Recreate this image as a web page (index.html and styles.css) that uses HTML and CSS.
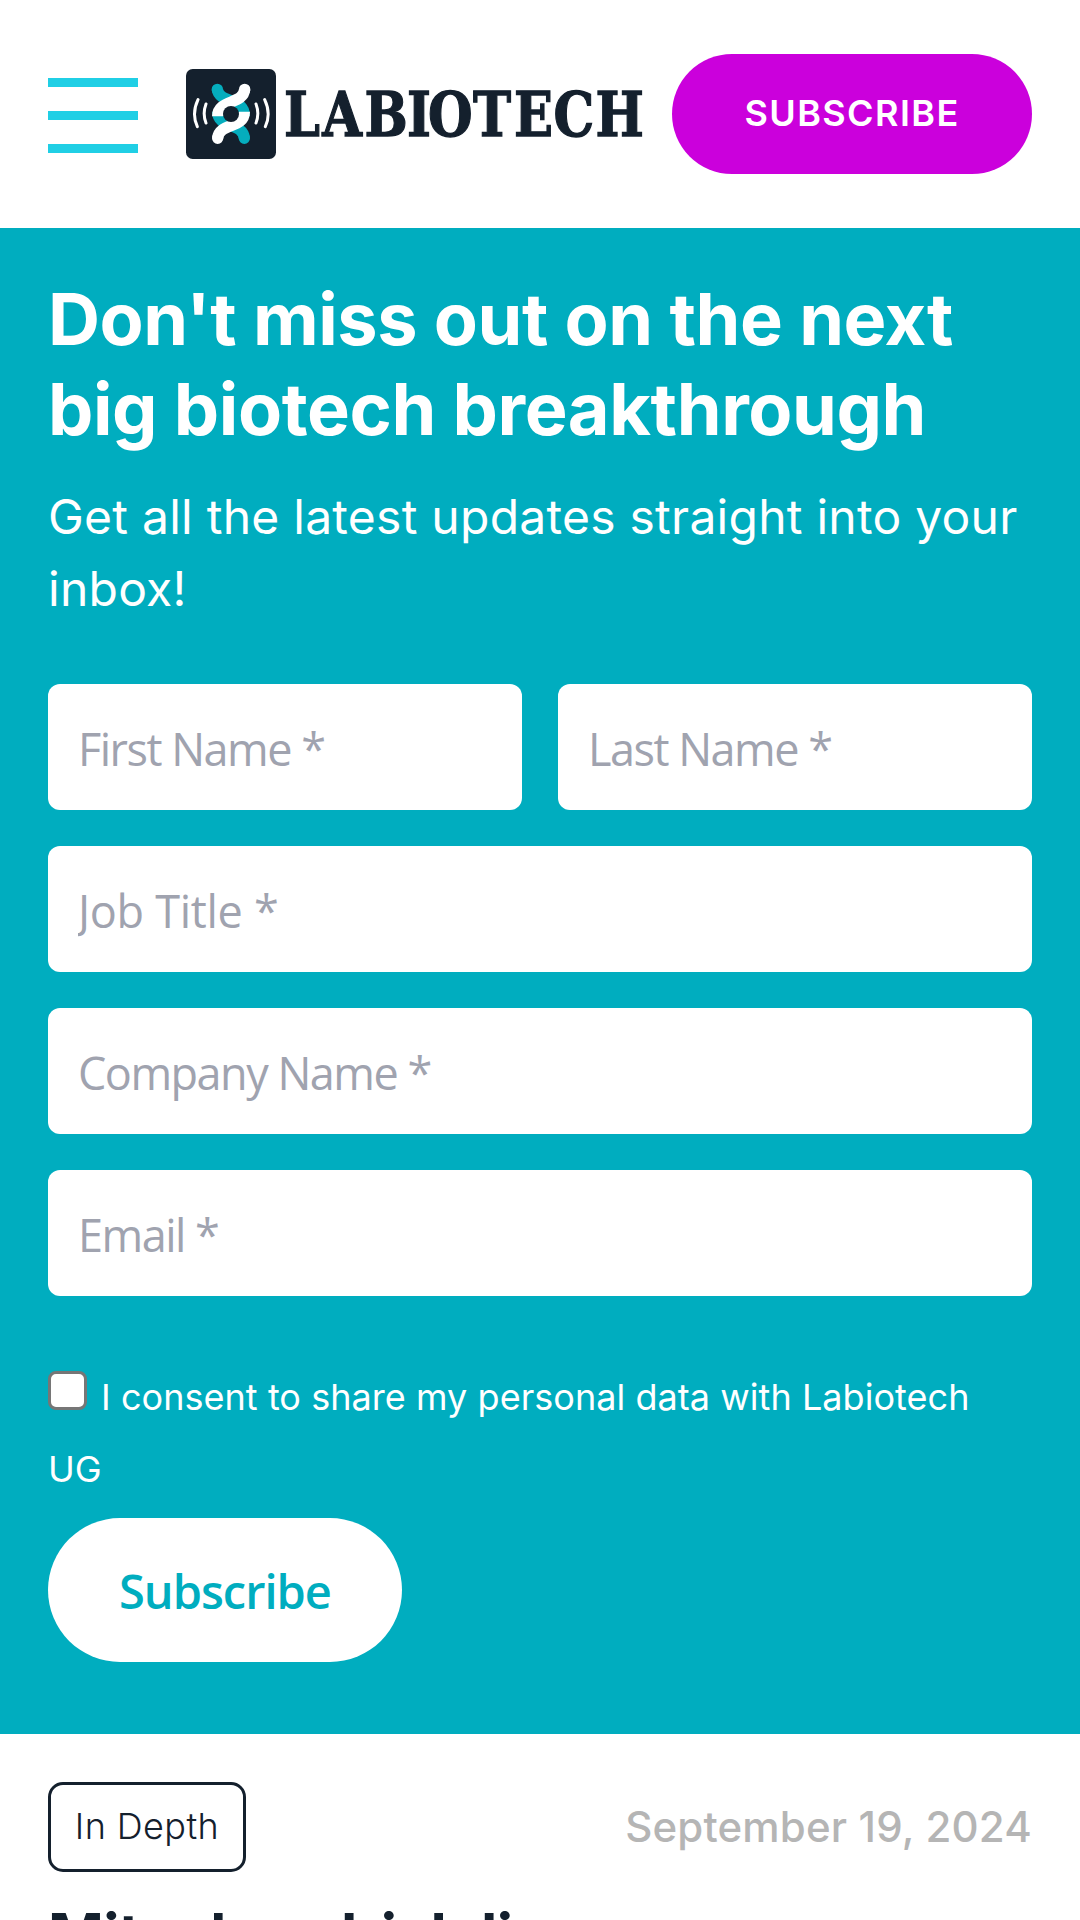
FILE: index.html
```html
<!DOCTYPE html>
<html lang="en">
<head>
<meta charset="utf-8">
<title>Labiotech</title>
<link rel="stylesheet" href="styles.css">
</head>
<body>
<header class="header">
  <button class="menu" aria-label="Menu"><span></span><span></span><span></span></button>
  <a class="logo" href="#" aria-label="Labiotech">
    <svg class="logo-mark" viewBox="0 0 270 270">
      <rect width="270" height="270" rx="20" fill="#14202d"/>
      <g fill="none" stroke-width="34">
        <g stroke="#05adbd">
          <path d="M94 61C98 103 175 85 175 141"/>
          <path d="M95 128C95 178 170 160 175 207"/>
          <path d="M94 61v1M175 207v1" stroke-linecap="round"/>
        </g>
        <g stroke="#fff">
          <path d="M176 61C172 108 95 90 95 142"/>
          <path d="M175 128C175 180 100 160 95 207"/>
          <path d="M176 61v1M95 207v1" stroke-linecap="round"/>
        </g>
      </g>
      <circle cx="135" cy="135" r="24" fill="#14202d"/>
      <g fill="none" stroke="#fff" stroke-width="9" stroke-linecap="round">
        <path d="M36 92Q16 134 34 173M60 105Q49 134 60 162M210 105Q221 134 210 162M236 92Q256 134 238 173"/>
      </g>
    </svg>
    <svg class="logo-text" viewBox="0 0 360 90">
      <text transform="scale(.84 1)" x="-2.4 43.2 93.4 144 169 222.6 271.4 318.5 368.5" y="67.3">LABIOTECH</text>
    </svg>
  </a>
  <a class="header-cta" href="#">SUBSCRIBE</a>
</header>
<section class="signup">
  <h2>Don't miss out on the next big biotech breakthrough</h2>
  <p class="lead">Get all the latest updates straight into your inbox!</p>
  <form class="form">
    <input class="field half" type="text" placeholder="First Name *">
    <input class="field half" type="text" placeholder="Last Name *">
    <input class="field job" type="text" placeholder="Job Title *">
    <input class="field" type="text" placeholder="Company Name *">
    <input class="field" type="email" placeholder="Email *">
    <label class="consent"><input type="checkbox" class="check">I consent to share my personal data with Labiotech UG</label>
    <button type="button" class="submit">Subscribe</button>
  </form>
</section>
<article class="post">
  <div class="meta">
    <a class="tag" href="#">In Depth</a>
    <time datetime="2024-09-19">September 19, 2024</time>
  </div>
  <h1>Mitochondrial diseases</h1>
</article>
</body>
</html>
```
FILE: styles.css
```css
* { box-sizing: border-box; }
html, body { height: 1920px; overflow: hidden; }
body { margin: 0; background: #fff; color: #14202d; font-family: Inter, sans-serif; }
a { color: inherit; text-decoration: none; }
button, input { font: inherit; border: 0; margin: 0; padding: 0; }

.header { height: 228px; padding: 0 48px; display: flex; align-items: center; }
.menu { width: 90px; display: flex; flex-direction: column; gap: 24px; background: none; margin-top: 3px; }
.menu span { height: 9px; background: #20cfe5; }
.logo { display: flex; gap: 10px; margin-left: 48px; }
.logo-mark { width: 90px; height: 90px; }
.logo-text { width: 360px; height: 90px; overflow: visible; }
.logo-text text { font: bold 61px "DejaVu Serif", serif; fill: #14202d; stroke: #14202d; stroke-width: 1.3px; }
.header-cta { width: 360px; height: 120px; margin-left: auto; padding-bottom: 2px; border-radius: 60px; background: #cb00dc; color: #fff; display: flex; align-items: center; justify-content: center; font-size: 36px; font-weight: 600; letter-spacing: 1.4px; }

.signup { height: 1506px; padding: 46px 48px 0; background: #00adbf; color: #fff; }
.signup h2 { margin: 0; font-size: 72px; line-height: 90px; font-weight: 650; letter-spacing: -0.4px; }
.lead { margin: 27px 0 0; font-size: 48px; line-height: 72px; letter-spacing: 0.25px; }
.form { display: flex; flex-wrap: wrap; gap: 36px; margin-top: 59px; }
.field { width: 100%; height: 126px; border-radius: 12px; padding: 3px 30px 0; background: #fff; font-family: "Open Sans", sans-serif; font-size: 45px; letter-spacing: -1.5px; }
.field::placeholder { color: #a0a3af; opacity: 1; }
.half { width: 474px; }
.job { letter-spacing: -0.3px; }
.consent { width: 100%; margin-top: 29px; padding-right: 20px; font-size: 36px; line-height: 72px; letter-spacing: 0.05px; }
.check { appearance: none; width: 39px; height: 39px; margin-right: 14px; border: 3px solid #767676; border-radius: 8px; background: #fff; vertical-align: 0; }
.submit { width: 354px; height: 144px; margin-top: -23px; padding-top: 1px; border-radius: 72px; background: #fff; color: #00adbf; font-family: "Open Sans", sans-serif; font-size: 47px; font-weight: 600; letter-spacing: -1px; }

.post { padding: 48px 48px 0; }
.meta { display: flex; justify-content: space-between; align-items: center; }
.tag { width: 198px; height: 90px; padding-bottom: 2px; border: 3px solid #14202d; border-radius: 15px; display: flex; align-items: center; justify-content: center; font-size: 36px; font-weight: 300; letter-spacing: 0.4px; }
.meta time { padding-bottom: 2px; color: #b5b5b5; font-size: 42px; font-weight: 500; letter-spacing: 0.17px; }
.post h1 { margin: 26px 0 0; font-size: 60px; line-height: 75px; font-weight: 700; letter-spacing: -0.7px; white-space: nowrap; }
```
